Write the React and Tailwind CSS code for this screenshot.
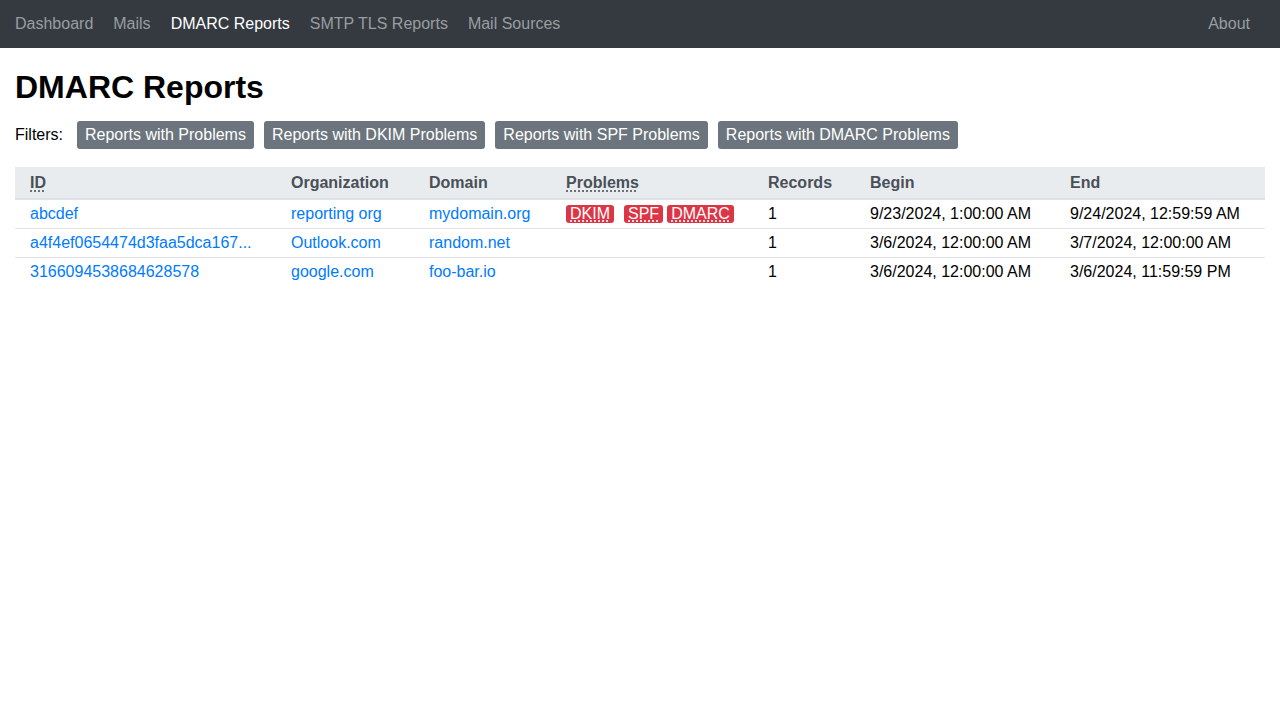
// DMARC reports page: navbar, filter buttons and report table

const navItems = [
  { label: 'Dashboard', active: false },
  { label: 'Mails', active: false },
  { label: 'DMARC Reports', active: true },
  { label: 'SMTP TLS Reports', active: false },
  { label: 'Mail Sources', active: false },
];

const filters = [
  'Reports with Problems',
  'Reports with DKIM Problems',
  'Reports with SPF Problems',
  'Reports with DMARC Problems',
];

const reports = [
  {
    id: 'abcdef',
    org: 'reporting org',
    domain: 'mydomain.org',
    problems: ['DKIM', 'SPF', 'DMARC'],
    records: 1,
    begin: '9/23/2024, 1:00:00 AM',
    end: '9/24/2024, 12:59:59 AM',
  },
  {
    id: 'a4f4ef0654474d3faa5dca167...',
    org: 'Outlook.com',
    domain: 'random.net',
    problems: [],
    records: 1,
    begin: '3/6/2024, 12:00:00 AM',
    end: '3/7/2024, 12:00:00 AM',
  },
  {
    id: '3166094538684628578',
    org: 'google.com',
    domain: 'foo-bar.io',
    problems: [],
    records: 1,
    begin: '3/6/2024, 12:00:00 AM',
    end: '3/6/2024, 11:59:59 PM',
  },
];

// margins copy the uneven spacing between badges in the original
const badgeMargin = { DKIM: 'mr-[10px]', SPF: 'mr-[4px]', DMARC: '' };

const Navbar = () => (
  <nav className="h-12 bg-[#343a40] flex items-center px-[15px]">
    <div className="flex gap-[20px] text-base">
      {navItems.map(item => (
        <a
          key={item.label}
          className={item.active ? 'text-white' : 'text-[#9a9da0]'}
        >
          {item.label}
        </a>
      ))}
    </div>
    <a className="ml-auto mr-[15px] text-[#9a9da0] text-base">About</a>
  </nav>
);

const Badge = ({ name }) => (
  <abbr
    title={`${name} problem`}
    className={`inline-block bg-[#dc3545] text-white rounded-[3px] px-[4px] leading-[18px] text-base underline decoration-dotted underline-offset-[2px] ${badgeMargin[name]}`}
  >
    {name}
  </abbr>
);

export default function App() {
  return (
    <div className="min-h-[720px] bg-white text-black font-['Liberation_Sans',Arial,sans-serif]">
      <Navbar />
      <main className="px-[15px]">
        <h1 className="text-[32px] font-bold leading-[38px] mt-[20px]">
          DMARC Reports
        </h1>
        <div className="flex items-center mt-[15px] mb-[18px]">
          <span className="text-base mr-[14px]">Filters:</span>
          <div className="flex gap-[10px]">
            {filters.map(f => (
              <button
                key={f}
                className="bg-[#6c757d] text-white text-base rounded-[3px] px-[8px] h-[28px] leading-[28px]"
              >
                {f}
              </button>
            ))}
          </div>
        </div>
        <table className="w-[1250px] table-fixed border-collapse text-base">
          <colgroup>
            <col className="w-[261px]" />
            <col className="w-[138px]" />
            <col className="w-[137px]" />
            <col className="w-[202px]" />
            <col className="w-[102px]" />
            <col className="w-[200px]" />
            <col className="w-[210px]" />
          </colgroup>
          <thead>
            <tr className="bg-[#e9ecef] text-[#495057] h-[32px] border-b-2 border-[#dee2e6]">
              <th className="text-left pl-[15px] font-bold">
                <abbr title="Report ID" className="underline decoration-dotted underline-offset-[3px]">ID</abbr>
              </th>
              <th className="text-left pl-[15px] font-bold">Organization</th>
              <th className="text-left pl-[15px] font-bold">Domain</th>
              <th className="text-left pl-[15px] font-bold">
                <abbr title="Problems" className="underline decoration-dotted underline-offset-[3px]">Problems</abbr>
              </th>
              <th className="text-left pl-[15px] font-bold">Records</th>
              <th className="text-left pl-[15px] font-bold">Begin</th>
              <th className="text-left pl-[15px] font-bold">End</th>
            </tr>
          </thead>
          <tbody>
            {reports.map(r => (
              <tr key={r.id} className="h-[29px] border-b border-[#dee2e6] last:border-b-0">
                <td className="pl-[15px] text-[#007bff] whitespace-nowrap">{r.id}</td>
                <td className="pl-[15px] text-[#007bff]">{r.org}</td>
                <td className="pl-[15px] text-[#007bff]">{r.domain}</td>
                <td className="pl-[15px]">
                  {r.problems.map(p => <Badge key={p} name={p} />)}
                </td>
                <td className="pl-[15px]">{r.records}</td>
                <td className="pl-[15px]">{r.begin}</td>
                <td className="pl-[15px]">{r.end}</td>
              </tr>
            ))}
          </tbody>
        </table>
      </main>
    </div>
  );
}
